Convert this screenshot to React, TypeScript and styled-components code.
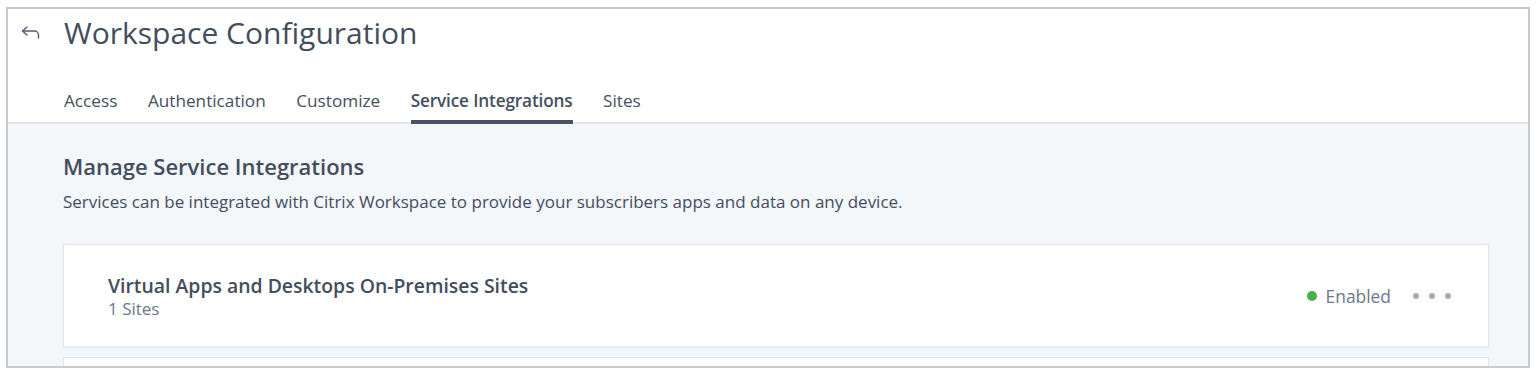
import React from "react";
import styled, { createGlobalStyle } from "styled-components";

const GlobalStyle = createGlobalStyle`
  html, body {
    margin: 0;
    padding: 0;
    background: #ffffff;
  }
  body {
    font-family: "Open Sans", "Noto Sans", sans-serif;
    color: #434d5e;
  }
`;

const Frame = styled.div`
  margin: 7px 0 0 6px;
  width: 1524px;
  height: 361px;
  box-sizing: border-box;
  border: 2px solid #c9cacc;
  overflow: hidden;
  display: flex;
  flex-direction: column;
`;

const Header = styled.header`
  background: #ffffff;
  border-bottom: 2px solid #e3e5e8;
  flex-shrink: 0;
`;

const TitleRow = styled.div`
  display: flex;
  align-items: center;
  gap: 23px;
  height: 46px;
  padding-left: 13px;
`;

const BackButton = styled.button`
  display: flex;
  align-items: center;
  justify-content: center;
  width: 20px;
  height: 18px;
  padding: 0;
  border: none;
  background: transparent;
  color: #535c6b;
  cursor: pointer;
`;

const Title = styled.h1`
  margin: 0;
  font-size: 30px;
  font-weight: 400;
  color: #434d5e;
`;

const Tabs = styled.nav`
  display: flex;
  gap: 30.5px;
  padding-left: 56px;
  margin-top: 35px;
`;

const Tab = styled.div<{ active?: boolean }>`
  font-size: 17.2px;
  line-height: 22px;
  padding-bottom: 8px;
  color: #454f60;
  font-weight: ${({ active }) => (active ? 600 : 400)};
  letter-spacing: ${({ active }) => (active ? "-0.15px" : "0")};
  border-bottom: 4px solid ${({ active }) => (active ? "#4a5366" : "transparent")};
  margin-bottom: -2px;
  cursor: pointer;
`;

const Content = styled.main`
  flex: 1;
  background: #f4f7fa;
  padding: 27px 39px 0 55px;
`;

const SectionTitle = styled.h2`
  margin: 0;
  font-size: 22px;
  line-height: 30px;
  font-weight: 600;
  color: #434d5e;
`;

const Description = styled.p`
  margin: 10px 0 0;
  font-size: 17px;
  line-height: 22px;
  color: #434d5e;
`;

const CardList = styled.div`
  display: flex;
  flex-direction: column;
  gap: 10px;
  margin-top: 31px;
`;

const Card = styled.div`
  background: #ffffff;
  border: 1px solid #e4e8ec;
  box-shadow: 0 1px 3px rgba(40, 55, 75, 0.08);
  height: 101px;
  padding: 0 37px 0 44px;
  display: flex;
  align-items: center;
  justify-content: space-between;
`;

const CardInfo = styled.div`
  display: flex;
  flex-direction: column;
  padding-top: 2px;
`;

const CardTitle = styled.div`
  font-size: 19.4px;
  line-height: 24px;
  font-weight: 600;
  color: #434d5e;
`;

const CardMeta = styled.div`
  font-size: 17px;
  line-height: 22px;
  color: #6c7789;
`;

const CardActions = styled.div`
  display: flex;
  align-items: center;
  gap: 22px;
`;

const Status = styled.div`
  display: flex;
  align-items: center;
  gap: 9px;
  font-size: 17.4px;
  color: #6c7789;
`;

const StatusDot = styled.span<{ color: string }>`
  width: 10px;
  height: 10px;
  border-radius: 50%;
  background: ${({ color }) => color};
`;

const MoreButton = styled.button`
  display: flex;
  gap: 10px;
  padding: 0;
  border: none;
  background: transparent;
  cursor: pointer;
`;

const MoreDot = styled.span`
  width: 6px;
  height: 6px;
  border-radius: 50%;
  background: #a7abb3;
`;

const BackIcon = () => (
  <svg width="20" height="15" viewBox="0 0 20 15" fill="none">
    <path
      d="M6 2 L1.5 6 L6 10"
      stroke="currentColor"
      strokeWidth="1.4"
      strokeLinecap="round"
      strokeLinejoin="round"
    />
    <path
      d="M1.8 6 H13.5 a4 4 0 0 1 4 4 V13"
      stroke="currentColor"
      strokeWidth="1.4"
      strokeLinecap="round"
    />
  </svg>
);

const tabs = ["Access", "Authentication", "Customize", "Service Integrations", "Sites"];

const integrations = [
  { name: "Virtual Apps and Desktops On-Premises Sites", meta: "1 Sites", status: "Enabled" },
  { name: "", meta: "", status: "" },
];

export default function App() {
  return (
    <>
      <GlobalStyle />
      <Frame>
        <Header>
          <TitleRow>
            <BackButton aria-label="Back">
              <BackIcon />
            </BackButton>
            <Title>Workspace Configuration</Title>
          </TitleRow>
          <Tabs>
            {tabs.map((t) => (
              <Tab key={t} active={t === "Service Integrations"}>
                {t}
              </Tab>
            ))}
          </Tabs>
        </Header>
        <Content>
          <SectionTitle>Manage Service Integrations</SectionTitle>
          <Description>
            Services can be integrated with Citrix Workspace to provide your subscribers apps and data on any device.
          </Description>
          <CardList>
            {integrations.map((item, i) => (
              <Card key={i}>
                {item.name && (
                  <>
                    <CardInfo>
                      <CardTitle>{item.name}</CardTitle>
                      <CardMeta>{item.meta}</CardMeta>
                    </CardInfo>
                    <CardActions>
                      <Status>
                        <StatusDot color="#46b04c" />
                        {item.status}
                      </Status>
                      <MoreButton aria-label="More">
                        <MoreDot />
                        <MoreDot />
                        <MoreDot />
                      </MoreButton>
                    </CardActions>
                  </>
                )}
              </Card>
            ))}
          </CardList>
        </Content>
      </Frame>
    </>
  );
}
